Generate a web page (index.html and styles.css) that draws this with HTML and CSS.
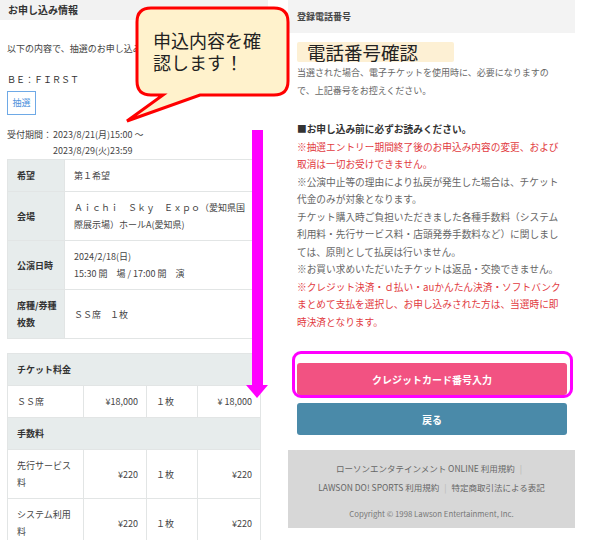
FILE: index.html
```html
<!DOCTYPE html>
<html lang="ja">
<head>
<meta charset="utf-8">
<title>お申し込み情報</title>
<link rel="stylesheet" href="styles.css">
</head>
<body>
<div class="page">
  <section class="left">
    <div class="lhead">お申し込み情報</div>
    <p class="intro">以下の内容で、抽選のお申し込み</p>
    <p class="artist">ＢＥ：ＦＩＲＳＴ</p>
    <span class="badge">抽選</span>
    <div class="period">
      <span class="plabel">受付期間：</span>
      <span class="pvalue">2023/8/21(月)15:00 ～<br>2023/8/29(火)23:59</span>
    </div>
    <table class="info">
      <tr><th>希望</th><td>第１希望</td></tr>
      <tr><th>会場</th><td class="nw">Ａｉｃｈｉ　Ｓｋｙ　Ｅｘｐｏ（愛知県国<br>際展示場）ホールA(愛知県)</td></tr>
      <tr><th>公演日時</th><td class="nw">2024/2/18(日)<br>15:30 開　場 / 17:00 開　演</td></tr>
      <tr><th>席種/券種<br>枚数</th><td>ＳＳ席　１枚</td></tr>
    </table>
    <table class="fees">
      <colgroup><col class="c1"><col class="c2"><col class="c3"><col class="c4"></colgroup>
      <tr><th colspan="4">チケット料金</th></tr>
      <tr><td>ＳＳ席</td><td class="r">¥18,000</td><td>１枚</td><td class="r">¥ 18,000</td></tr>
      <tr><th colspan="4">手数料</th></tr>
      <tr><td>先行サービス<br>料</td><td class="r">¥220</td><td>１枚</td><td class="r">¥220</td></tr>
      <tr><td>システム利用<br>料</td><td class="r">¥220</td><td>１枚</td><td class="r">¥220</td></tr>
    </table>
  </section>

  <section class="right">
    <div class="rhead">登録電話番号</div>
    <div class="phone">電話番号確認</div>
    <p class="note">当選された場合、電子チケットを使用時に、必要になりますの<br>で、上記番号をお控えください。</p>
    <div class="notice">
      <p class="strong">■お申し込み前に必ずお読みください。</p>
      <p class="red">※抽選エントリー期間終了後のお申込み内容の変更、および<br>取消は一切お受けできません。</p>
      <p>※公演中止等の理由により払戻が発生した場合は、チケット<br>代金のみが対象となります。</p>
      <p>チケット購入時ご負担いただきました各種手数料（システム<br>利用料・先行サービス料・店頭発券手数料など）に関しまし<br>ては、原則として払戻は行いません。</p>
      <p>※お買い求めいただいたチケットは返品・交換できません。</p>
      <p class="red">※クレジット決済・ｄ払い・auかんたん決済・ソフトバンク<br>まとめて支払を選択し、お申し込みされた方は、当選時に即<br>時決済となります。</p>
    </div>
    <button class="btn pink">クレジットカード番号入力</button>
    <button class="btn teal">戻る</button>
    <footer class="foot">
      <p class="links">ローソンエンタテインメント ONLINE 利用規約<span class="sep">|</span></p>
      <p class="links">LAWSON DO! SPORTS 利用規約<span class="sep">|</span>特定商取引法による表記</p>
      <p class="copy">Copyright © 1998 Lawson Entertainment, Inc.</p>
    </footer>
  </section>
</div>

<svg class="bubble-shape" width="180" height="130" viewBox="0 0 180 130">
  <path d="M31,8 H154 Q168,8 168,22 V81 Q168,95 154,95 H80 L7,121 L43,95 H31 Q17,95 17,81 V22 Q17,8 31,8 Z" fill="#fff2cc" stroke="#ff0000" stroke-width="3"/>
</svg>
<div class="bubble-text">申込内容を確<br>認します！</div>

<svg class="arrow" width="22" height="268" viewBox="0 0 22 268">
  <rect x="6" y="0" width="11" height="256" fill="#ff00ff"/>
  <polygon points="0,255 22,255 11,268" fill="#ff00ff"/>
</svg>
<div class="hl-box"></div>
</body>
</html>
```

FILE: styles.css
```css
* { box-sizing: border-box; }
html, body { margin: 0; padding: 0; }
body {
  width: 591px;
  height: 540px;
  overflow: hidden;
  position: relative;
  background: #fff;
  color: #333;
  font-family: "Noto Sans CJK JP", "Noto Sans", sans-serif;
}
p { margin: 0; }

.page { display: flex; gap: 20px; align-items: flex-start; }
.left { width: 268px; flex: none; }
.right { width: 287px; flex: none; }

/* left */
.lhead {
  height: 20px;
  background: #f2f2f2;
  padding-left: 8px;
  font-size: 10px;
  font-weight: bold;
  line-height: 20px;
  color: #333;
}
.intro {
  margin: 20px 0 0 7px;
  width: 129px;
  overflow: hidden;
  font-size: 9px;
  line-height: 17px;
  color: #444;
  white-space: nowrap;
}
.artist { margin: 14px 0 0 7px; font-size: 9px; line-height: 17px; color: #333; }
.badge {
  display: block;
  margin: 3px 0 0 7px;
  width: 29px;
  height: 24px;
  border: 1px solid #6ea9e6;
  color: #4f93dc;
  font-size: 9px;
  line-height: 22px;
  text-align: center;
}
.period { display: flex; margin: 12px 0 0 7px; font-size: 9px; line-height: 16px; color: #444; }
.plabel { width: 46px; flex: none; }

table { border-collapse: collapse; margin-left: 7px; width: 253px; font-size: 9px; line-height: 17px; color: #444; }
th, td { border: 1px solid #e2e5e5; padding: 7px 9px; vertical-align: middle; text-align: left; }
.info th { width: 57px; padding-right: 3px; background: #e7ecec; font-weight: bold; color: #333; }
.nw { white-space: nowrap; }
.fees { margin-top: 14px; table-layout: fixed; }
.fees th { background: #e7ecec; font-weight: bold; color: #333; }
.fees td { padding: 7px 8px 7px 9px; }
.fees .r { text-align: right; }
.c1 { width: 76px; }
.c2 { width: 63px; }
.c3 { width: 51px; }
.c4 { width: 63px; }

/* right */
.rhead {
  height: 33px;
  background: #f3f3f3;
  padding-left: 9px;
  font-size: 9px;
  font-weight: bold;
  line-height: 33px;
  color: #444;
}
.phone {
  margin: 9px 0 0 9px;
  width: 157px;
  height: 20px;
  padding-left: 10px;
  background: #fdf0d4;
  font-size: 18.5px;
  line-height: 20px;
  color: #222;
  border-radius: 2px;
}
.note { margin: 2px 9px 0 9px; font-size: 9px; line-height: 17.5px; color: #666; white-space: nowrap; }
.notice { margin: 22px 0 0 9px; font-size: 9.7px; line-height: 17.5px; color: #666; white-space: nowrap; }
.notice .strong { font-weight: bold; color: #333; }
.notice .red { color: #e23b3f; }

.btn {
  display: block;
  margin: 0 0 0 9px;
  width: 270px;
  height: 32px;
  border: none;
  border-radius: 3px;
  color: #fff;
  font-family: inherit;
  font-size: 10px;
  font-weight: bold;
  padding: 0;
}
.pink { margin-top: 32px; background: #f25282; }
.teal { margin-top: 8px; background: #4a8aa9; }

.foot {
  margin-top: 15px;
  height: 78px;
  background: #d7d7d7;
  padding-top: 9px;
  text-align: center;
  color: #666;
}
.links { font-size: 8.5px; line-height: 19px; }
.sep { color: #b5b5b5; margin: 0 5px; }
.copy { margin-top: 10px; font-size: 7.8px; line-height: 14px; color: #777; }

/* annotations */
.bubble-shape { position: absolute; left: 120px; top: 0; }
.bubble-text {
  position: absolute;
  left: 153px;
  top: 29px;
  font-size: 18px;
  line-height: 22px;
  color: #222;
}
.arrow { position: absolute; left: 246px; top: 130px; }
.hl-box {
  position: absolute;
  left: 292px;
  top: 351px;
  width: 281px;
  height: 47px;
  border: 3px solid #ff00ff;
  border-radius: 9px;
}
```
